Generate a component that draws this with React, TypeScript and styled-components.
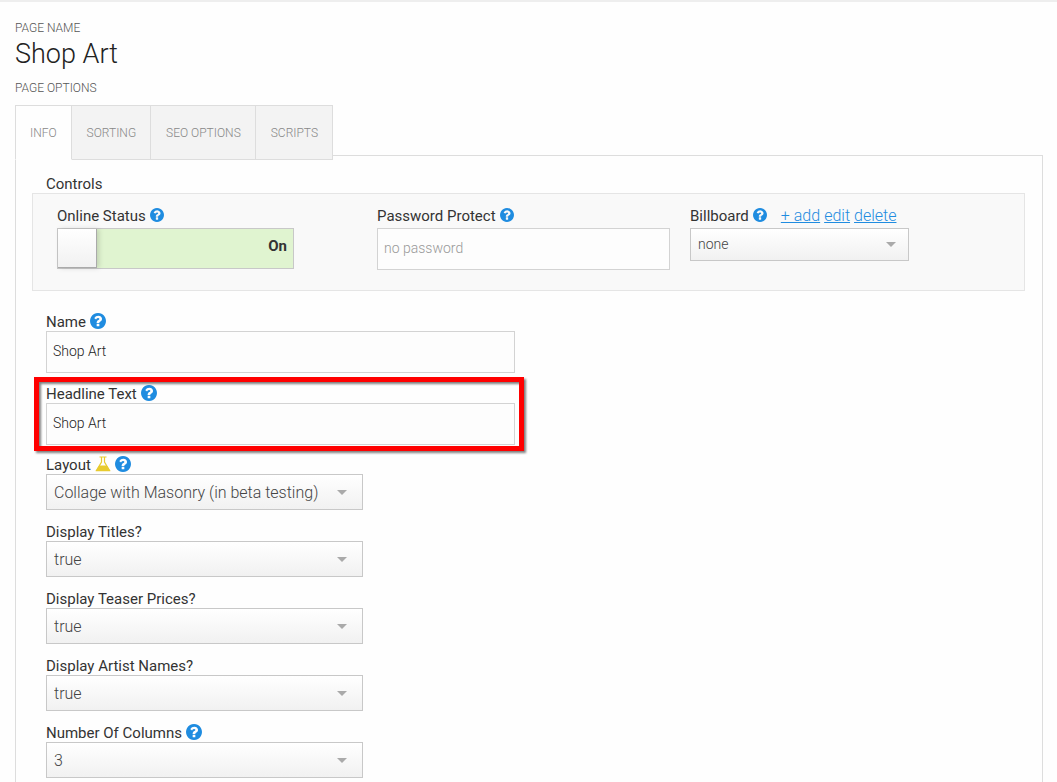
import React, { useId, useState } from "react";
import styled, { createGlobalStyle, css } from "styled-components";

const GlobalStyle = createGlobalStyle`
  *, *::before, *::after { box-sizing: border-box; }
  body {
    margin: 0;
    background: #fefefe;
    color: #333;
    font-family: Roboto, "Liberation Sans", sans-serif;
    font-size: 15px;
    line-height: 20px;
  }
  button, input, select { font: inherit; color: inherit; margin: 0; }
`;

const Page = styled.main`
  border-top: 2px solid #eee;
  padding: 16px 14px 0 15px;
`;

const Eyebrow = styled.p`
  margin: 0;
  color: #555;
  font-size: 12px;
  font-weight: 300;
  line-height: 20px;
  text-transform: uppercase;
`;

const Title = styled.h1`
  margin: 0 0 8px;
  color: #222;
  font-size: 27px;
  font-weight: 300;
  line-height: 32px;
`;

const Tabs = styled.div`
  position: relative;
  z-index: 1;
  display: flex;
  margin: 7px 0 -5px;
`;

const Tab = styled.button<{ $active: boolean }>`
  height: 55px;
  padding: 0 14px 0 15px;
  border: 1px solid #ddd;
  border-left-width: 0;
  background: #f3f3f3;
  color: #888;
  font-size: 12px;
  font-weight: 300;
  text-transform: uppercase;
  &:first-child {
    border-left-width: 1px;
    padding-left: 14px;
  }
  ${(p) => p.$active && css`
    background: #fefefe;
    border-bottom-color: #fefefe;
  `}
`;

const Panel = styled.section`
  border: 1px solid #ddd;
  border-bottom: 0;
  padding: 19px 17px 5px 16px;
`;

const Legend = styled.h2`
  margin: 0 14px;
  font-size: 15px;
  font-weight: 400;
  line-height: 18px;
`;

const Controls = styled.div`
  display: grid;
  grid-template-columns: 320fr 313fr 334fr;
  min-height: 98px;
  margin-bottom: 21px;
  padding: 12px 0 20px 24px;
  border: 1px solid #e5e5e5;
  background: #f9f9f9;
`;

const Group = styled.div<{ $gap: number; $after?: number }>`
  display: grid;
  gap: ${(p) => p.$gap}px;
  margin: 0 14px ${(p) => p.$after ?? 0}px;
`;

const FieldBox = styled.div<{ $width: number }>`
  position: relative;
  width: 100%;
  max-width: ${(p) => p.$width}px;
`;

const Highlight = styled.div`
  position: absolute;
  inset: -7px -9px -6px -12px;
  border: 5px solid #f00;
  filter: drop-shadow(2px 2px 1px rgba(0, 0, 0, 0.5));
  pointer-events: none;
`;

const LabelRow = styled.div<{ $inControls?: boolean }>`
  display: flex;
  align-items: center;
  gap: 4px;
  height: ${(p) => (p.$inControls ? 22 : 19)}px;
  padding-bottom: ${(p) => (p.$inControls ? 2 : 0)}px;
  white-space: nowrap;
`;

const IconButton = styled.button`
  display: flex;
  padding: 0 0 2px;
  border: 0;
  background: none;
  color: #1f8ce0;
`;

const Flask = styled.svg`
  width: 16px;
  height: 18px;
  padding-bottom: 2px;
`;

const Links = styled.span`
  display: flex;
  gap: 4px;
  margin-left: 10px;
  font-size: 16px;
  font-weight: 300;
`;

const Link = styled.a`
  color: #1f8ce0;
  text-decoration: underline;
`;

const TextInput = styled.input`
  display: block;
  width: 100%;
  height: 42px;
  padding: 0 6px 2px;
  border: 1px solid #d3d3d3;
  border-radius: 0;
  background: #fdfdfd;
  color: #222;
  font-size: 14px;
  font-weight: 300;
  &::placeholder { color: #999; opacity: 1; }
`;

const SelectFrame = styled.div`
  display: grid;
  align-items: center;
  > * { grid-area: 1 / 1; }
`;

const Select = styled.select<{ $compact?: boolean }>`
  appearance: none;
  width: 100%;
  height: ${(p) => (p.$compact ? 33 : 36)}px;
  padding: ${(p) => (p.$compact ? "0 32px 2px 7px" : "2px 32px 0 7px")};
  border: 1px solid #c8c8c8;
  border-radius: 0;
  background: linear-gradient(#fff, #f1f1f1);
  color: #444;
  font-size: ${(p) => (p.$compact ? 14 : 16)}px;
  font-weight: 300;
`;

const Caret = styled.svg<{ $compact?: boolean }>`
  justify-self: end;
  width: 10px;
  height: 5px;
  margin-right: ${(p) => (p.$compact ? 13 : 16)}px;
  pointer-events: none;
`;

const Toggle = styled.div<{ $on: boolean }>`
  display: flex;
  align-items: center;
  justify-content: space-between;
  height: 41px;
  border: 1px solid #c8c8c8;
  background: ${(p) => (p.$on ? "#e0f4d0" : "#eee")};
`;

const Knob = styled.input`
  appearance: none;
  width: 39px;
  height: 39px;
  border: solid #aaa;
  border-width: 0 1px 1px 0;
  background: linear-gradient(#fff, #f1f1f1);
  box-shadow: 2px 0 5px rgba(0, 0, 0, 0.15);
`;

const ToggleText = styled.span`
  padding: 0 6px 6px;
  font-size: 15px;
  font-weight: 700;
`;

function Help({ topic, size = 16 }: { topic: string; size?: number }) {
  return (
    <IconButton type="button" aria-label={`Help: ${topic}`}>
      <svg width={size} height={size} viewBox="0 128 1536 1536" fill="currentColor" aria-hidden="true">
        <path d="M896 1376v-192q0-14-9-23t-23-9H672q-14 0-23 9t-9 23v192q0 14 9 23t23 9h192q14 0 23-9t9-23zM1152 704q0-88-55.5-163T958 425t-170-41q-243 0-371 213-15 24 8 42l132 100q7 6 19 6 16 0 25-12 53-68 86-92 34-24 86-24 48 0 85.500 26t37.500 59q0 38-20 61t-68 45q-63 28-115.500 86.500T640 1020v36q0 14 9 23t23 9h192q14 0 23-9t9-23q0-19 21.500-49.500T972 957q32-18 49-28.500t46-35 44.500-48 28-60.500T1152 704zM1536 896q0 209-103 385.500T1153.500 1561 768 1664t-385.500-103T103 1281.500 0 896t103-385.500T382.500 231 768 128t385.500 103T1433 510.500 1536 896z" />
      </svg>
    </IconButton>
  );
}

function Dropdown({ id, options, compact }: { id: string; options: string[]; compact?: boolean }) {
  return (
    <SelectFrame>
      <Select id={id} $compact={compact} defaultValue={options[0]}>
        {options.map((o) => <option key={o}>{o}</option>)}
      </Select>
      <Caret $compact={compact} viewBox="0 0 10 5" aria-hidden="true"><path d="M0 0h10L5 5z" fill="#aaa" /></Caret>
    </SelectFrame>
  );
}

type FieldProps = {
  label: string;
  width: number;
  help?: boolean;
  beta?: boolean;
  highlighted?: boolean;
  inControls?: boolean;
  extra?: React.ReactNode;
  children: (id: string) => React.ReactNode;
};

function Field({ label, width, help, beta, highlighted, inControls, extra, children }: FieldProps) {
  const id = useId();
  return (
    <FieldBox $width={width}>
      <LabelRow $inControls={inControls}>
        <label htmlFor={id}>{label}</label>
        {beta && (
          <Flask viewBox="0 0 16 16" role="img" aria-label="Beta">
            <path d="M4.500 1h7M6.500 1v5L1.500 14.500h13L9.500 6V1" fill="none" stroke="#e8cb2e" strokeWidth="1.200" />
            <path d="M4.200 9.500h7.600l3.600 5.700H.600z" fill="#e8cb2e" />
          </Flask>
        )}
        {help && <Help topic={label} size={inControls ? 14 : 16} />}
        {extra}
      </LabelRow>
      {children(id)}
      {highlighted && <Highlight />}
    </FieldBox>
  );
}

const tabNames = ["Info", "Sorting", "SEO Options", "Scripts"];

export default function App() {
  const [tab, setTab] = useState("Info");
  const [online, setOnline] = useState(true);
  return (
    <>
      <GlobalStyle />
      <Page>
        <Eyebrow>Page Name</Eyebrow>
        <Title>Shop Art</Title>
        <Eyebrow>Page Options</Eyebrow>
        <Tabs role="tablist">
          {tabNames.map((name) => (
            <Tab key={name} type="button" role="tab" aria-selected={tab === name} $active={tab === name} onClick={() => setTab(name)}>
              {name}
            </Tab>
          ))}
        </Tabs>
        <Panel role="tabpanel">
          <Legend>Controls</Legend>
          <Controls>
            <Field label="Online Status" width={237} help inControls>
              {(id) => (
                <Toggle $on={online}>
                  <Knob id={id} type="checkbox" checked={online} onChange={() => setOnline(!online)} />
                  <ToggleText>{online ? "On" : "Off"}</ToggleText>
                </Toggle>
              )}
            </Field>
            <Field label="Password Protect" width={293} help inControls>
              {(id) => <TextInput id={id} placeholder="no password" />}
            </Field>
            <Field
              label="Billboard"
              width={219}
              help
              inControls
              extra={
                <Links>
                  <Link href="#add">+ add</Link>
                  <Link href="#edit">edit</Link>
                  <Link href="#delete">delete</Link>
                </Links>
              }
            >
              {(id) => <Dropdown id={id} options={["none"]} compact />}
            </Field>
          </Controls>
          <Group $gap={11} $after={10}>
            <Field label="Name" width={469} help>
              {(id) => <TextInput id={id} defaultValue="Shop Art" />}
            </Field>
            <Field label="Headline Text" width={469} help highlighted>
              {(id) => <TextInput id={id} defaultValue="Shop Art" />}
            </Field>
          </Group>
          <Group $gap={12}>
            <Field label="Layout" width={317} help beta>
              {(id) => <Dropdown id={id} options={["Collage with Masonry (in beta testing)"]} />}
            </Field>
            <Field label="Display Titles?" width={317}>
              {(id) => <Dropdown id={id} options={["true", "false"]} />}
            </Field>
            <Field label="Display Teaser Prices?" width={317}>
              {(id) => <Dropdown id={id} options={["true", "false"]} />}
            </Field>
            <Field label="Display Artist Names?" width={317}>
              {(id) => <Dropdown id={id} options={["true", "false"]} />}
            </Field>
            <Field label="Number Of Columns" width={317} help>
              {(id) => <Dropdown id={id} options={["3", "1", "2", "4"]} />}
            </Field>
          </Group>
        </Panel>
      </Page>
    </>
  );
}
